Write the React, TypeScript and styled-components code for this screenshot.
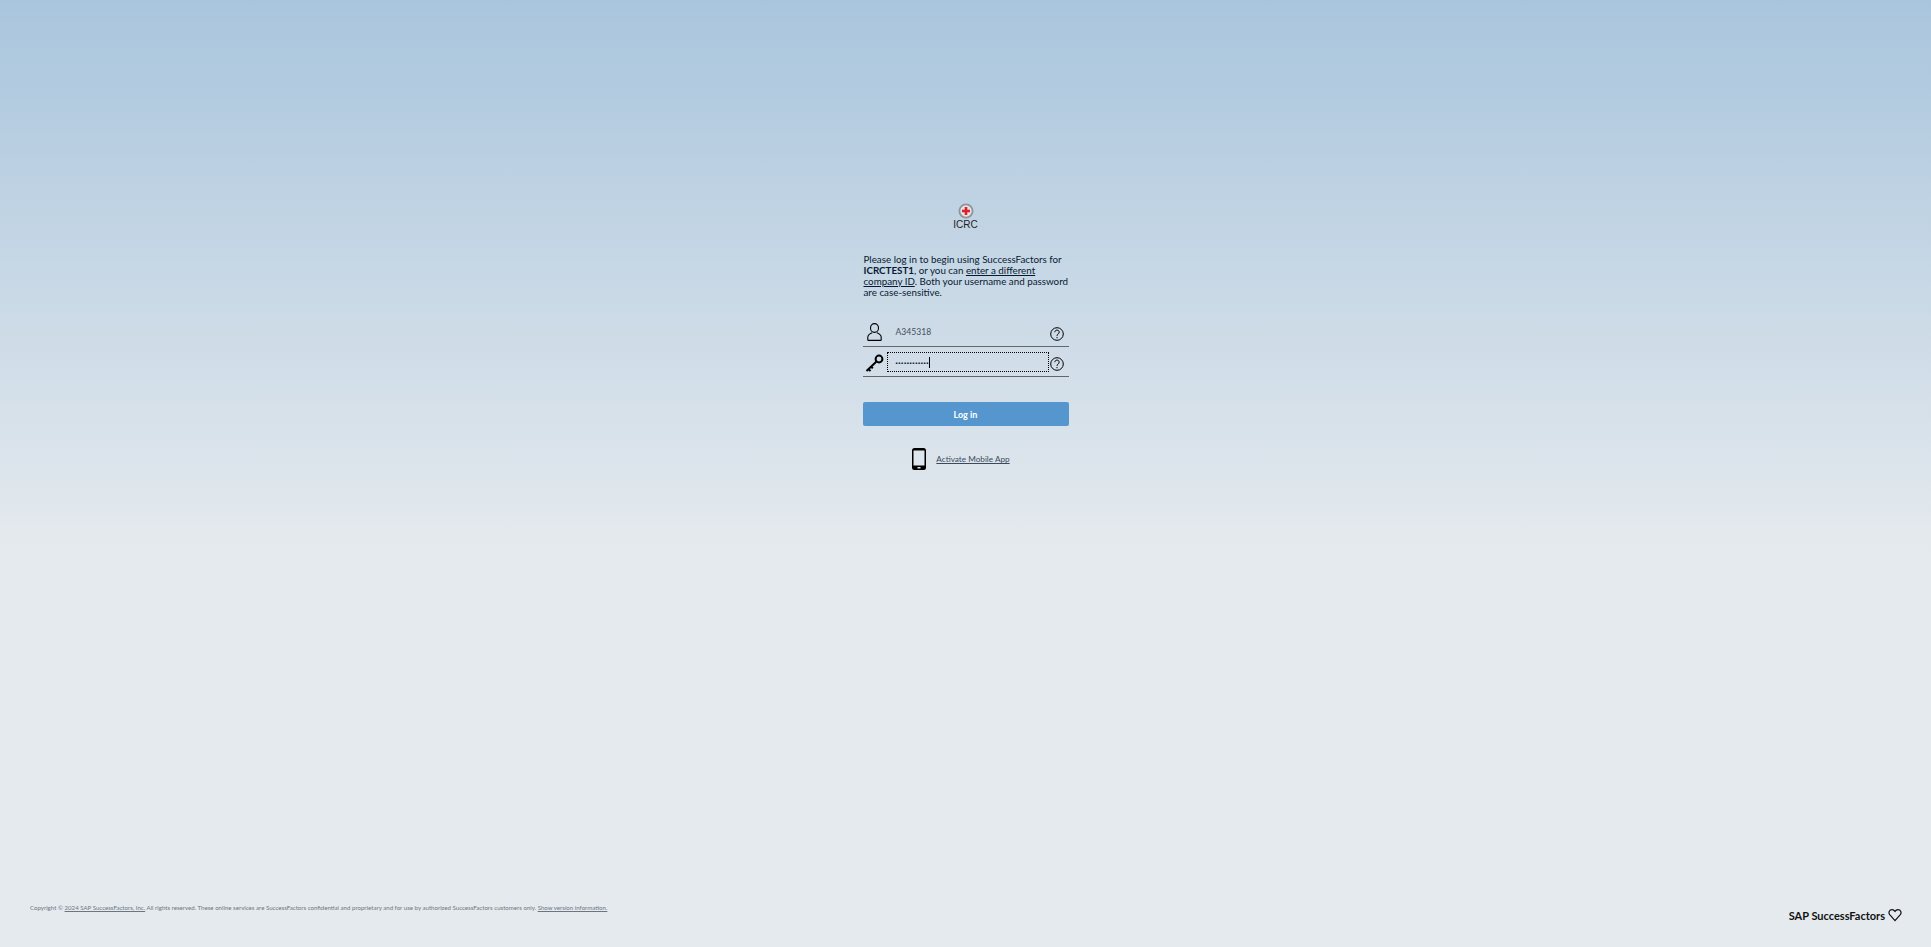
import React from "react";
import styled, { createGlobalStyle } from "styled-components";

const GlobalStyle = createGlobalStyle`
  html, body {
    margin: 0;
    padding: 0;
    height: 100%;
  }
  body {
    font-family: Lato, "Noto Sans", sans-serif;
    color: #0a1f3a;
  }
`;

const Page = styled.div`
  width: 100%;
  height: 947px;
  overflow: hidden;
  display: flex;
  flex-direction: column;
  background: linear-gradient(to bottom, #a9c5dd 0%, #e5eaee 58%, #e5eaee 100%);
`;

const Main = styled.main`
  flex: 1;
  display: flex;
  justify-content: center;
  padding-top: 203px;
`;

const Panel = styled.div`
  width: 206px;
  display: flex;
  flex-direction: column;
`;

const LogoBlock = styled.div`
  display: flex;
  flex-direction: column;
  align-items: center;
  height: 51px;
`;

const LogoName = styled.span`
  font-family: "Liberation Sans", Arial, sans-serif;
  font-size: 10px;
  line-height: 12px;
  color: #222;
`;

const Intro = styled.p`
  margin: 0;
  padding-left: 1px;
  font-size: 9.8px;
  line-height: 11px;
  height: 44px;
  color: #071a33;
  white-space: nowrap;
`;

const TextLink = styled.a`
  color: inherit;
  text-decoration: underline;
  text-underline-offset: 1px;
`;

const Fields = styled.div`
  display: flex;
  flex-direction: column;
  margin-top: 19px;
`;

const FieldRow = styled.div`
  height: 29px;
  display: flex;
  align-items: center;
  border-bottom: 1px solid #666;
`;

const FieldIcon = styled.span<{ $drop?: boolean }>`
  width: 24px;
  display: flex;
  justify-content: center;
  flex: none;
  color: #000;
  padding-top: ${({ $drop }) => ($drop ? "4px" : "0")};
`;

const ValueBox = styled.div<{ $focused?: boolean }>`
  flex: 1;
  height: ${({ $focused }) => ($focused ? "18px" : "20px")};
  padding-left: 8px;
  display: flex;
  align-items: center;
  font-size: 8.6px;
  color: #444f5c;
  border: 1px ${({ $focused }) => ($focused ? "dotted #000" : "solid transparent")};
  margin-top: ${({ $focused }) => ($focused ? "0" : "1px")};
`;

const Caret = styled.span`
  display: inline-block;
  width: 1px;
  height: 11px;
  margin-top: 1px;
  background: #000;
`;

const Dots = styled.span`
  font-family: "Noto Sans", sans-serif;
  font-size: 6px;
  line-height: 8px;
  margin-top: 2px;
  letter-spacing: 0.55px;
  color: #1b2430;
  font-weight: 700;
`;

const HelpIcon = styled.span`
  width: 14px;
  height: 14px;
  margin: 4px 5px 0 1px;
  flex: none;
  display: flex;
`;

const LoginButton = styled.button`
  margin-top: 25px;
  height: 24px;
  border: none;
  border-radius: 2px;
  background: #5496cd;
  color: #fff;
  font-family: inherit;
  font-size: 9px;
  font-weight: 700;
  padding: 0;
`;

const MobileRow = styled.div`
  margin-top: 22px;
  display: flex;
  align-items: center;
  justify-content: center;
  gap: 10px;
  padding-right: 9px;
`;

const MobileLink = styled(TextLink)`
  font-size: 8.2px;
  color: #3a4a5c;
`;

const Footer = styled.footer`
  display: flex;
  justify-content: space-between;
  align-items: flex-start;
  height: 44px;
  padding: 0 29px 0 30px;
`;

const Legal = styled.div`
  font-size: 6.1px;
  line-height: 8px;
  margin-top: 1px;
  color: #6d7680;
  white-space: nowrap;
`;

const Brand = styled.div`
  display: flex;
  align-items: center;
  gap: 3px;
  margin-top: 5px;
  font-size: 11px;
  font-weight: 700;
  color: #111;
`;

const CrossLogo = () => (
  <svg width="16" height="16" viewBox="0 0 16 16">
    <circle cx="8" cy="8" r="7.5" fill="#8f9498" />
    <circle cx="8" cy="8" r="5.7" fill="#e2e4e6" />
    <rect x="6.7" y="4" width="2.6" height="8" fill="#e0202a" />
    <rect x="4" y="6.7" width="8" height="2.6" fill="#e0202a" />
  </svg>
);

const UserGlyph = () => (
  <svg width="15" height="18" viewBox="0 0 15 18" fill="none" stroke="currentColor" strokeWidth="1.1">
    <ellipse cx="7.5" cy="5" rx="4" ry="4.4" />
    <path d="M.8 17.4v-3.2c0-2.4 2.4-3.6 4.4-4.4M14.2 17.4v-3.2c0-2.4-2.4-3.6-4.4-4.4M.8 17.4h13.4" />
  </svg>
);

const KeyGlyph = () => (
  <svg width="19" height="19" viewBox="0 0 19 19" fill="none" stroke="currentColor">
    <circle cx="14" cy="5" r="3.4" strokeWidth="2" />
    <path d="M11.5 7.5 1.5 17M3.5 15l2 2.2M6.2 12.5l1.6 1.8" strokeWidth="2" />
  </svg>
);

const HelpGlyph = () => (
  <svg width="14" height="14" viewBox="0 0 14 14" fill="none" stroke="#000" strokeWidth="1">
    <circle cx="7" cy="7" r="6.3" />
    <path d="M4.8 5.2C4.9 3.8 5.9 3.1 7 3.1c1.3 0 2.2.9 2.2 2 0 1.9-2.2 1.8-2.2 3.8" />
    <path d="M7 10v1.2" />
  </svg>
);

const PhoneGlyph = () => (
  <svg width="14" height="22" viewBox="0 0 14 22">
    <rect x="0" y="0" width="14" height="22" rx="2.5" fill="#000" />
    <rect x="1.5" y="2.5" width="11" height="15" fill="#dfe7ee" />
    <rect x="5.5" y="19" width="3" height="1.5" fill="#dfe7ee" />
  </svg>
);

const HeartGlyph = () => (
  <svg width="14" height="14" viewBox="0 0 14 14" fill="none" stroke="#111" strokeWidth="1.2">
    <path d="M7 12.6 1.7 6.6C.2 4.8 1.2 1.6 4 1.6c1.4 0 2.4.8 3 1.8.6-1 1.6-1.8 3-1.8 2.8 0 3.8 3.2 2.3 5z" />
  </svg>
);

export default function App() {
  return (
    <Page>
      <GlobalStyle />
      <Main>
        <Panel>
          <LogoBlock>
            <CrossLogo />
            <LogoName>ICRC</LogoName>
          </LogoBlock>
          <Intro>
            Please log in to begin using SuccessFactors for
            <br />
            <strong>ICRCTEST1</strong>, or you can <TextLink href="#">enter a different</TextLink>
            <br />
            <TextLink href="#">company ID</TextLink>. Both your username and password
            <br />
            are case-sensitive.
          </Intro>
          <Fields>
            <FieldRow>
              <FieldIcon>
                <UserGlyph />
              </FieldIcon>
              <ValueBox>A345318</ValueBox>
              <HelpIcon>
                <HelpGlyph />
              </HelpIcon>
            </FieldRow>
            <FieldRow>
              <FieldIcon $drop>
                <KeyGlyph />
              </FieldIcon>
              <ValueBox $focused>
                <Dots>••••••••••••</Dots>
                <Caret />
              </ValueBox>
              <HelpIcon>
                <HelpGlyph />
              </HelpIcon>
            </FieldRow>
          </Fields>
          <LoginButton>Log in</LoginButton>
          <MobileRow>
            <PhoneGlyph />
            <MobileLink href="#">Activate Mobile App</MobileLink>
          </MobileRow>
        </Panel>
      </Main>
      <Footer>
        <Legal>
          Copyright © <TextLink href="#">2024 SAP SuccessFactors, Inc.</TextLink> All rights reserved. These online
          services are SuccessFactors confidential and proprietary and for use by authorized SuccessFactors customers
          only. <TextLink href="#">Show version information.</TextLink>
        </Legal>
        <Brand>
          SAP SuccessFactors
          <HeartGlyph />
        </Brand>
      </Footer>
    </Page>
  );
}
